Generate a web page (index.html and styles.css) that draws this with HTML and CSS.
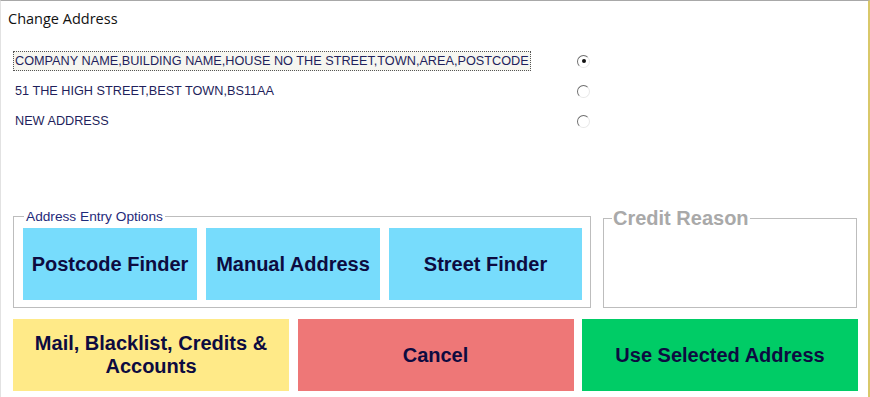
FILE: index.html
```html
<!DOCTYPE html>
<html lang="en">
  <head>
    <meta charset="UTF-8" />
    <meta name="viewport" content="width=device-width, initial-scale=1.0" />
    <title>Change Address</title>
    <link rel="stylesheet" href="styles.css">
  </head>
  <body>
    <div class="window">
      <div class="title">Change Address</div>

      <!-- Lista de endereços -->
      <ul class="addresses">
        <li class="address-row">
          <span class="address-cell"><span class="address-text selected">COMPANY NAME,BUILDING NAME,HOUSE NO THE STREET,TOWN,AREA,POSTCODE</span></span>
          <span class="radio checked"></span>
        </li>
        <li class="address-row">
          <span class="address-cell"><span class="address-text">51 THE HIGH STREET,BEST TOWN,BS11AA</span></span>
          <span class="radio"></span>
        </li>
        <li class="address-row">
          <span class="address-cell"><span class="address-text">NEW ADDRESS</span></span>
          <span class="radio"></span>
        </li>
      </ul>

      <!-- Opções de entrada -->
      <div class="options-row">
        <fieldset class="group entry-options">
          <legend>Address Entry Options</legend>
          <button class="btn btn-cyan btn-small">Postcode Finder</button>
          <button class="btn btn-cyan btn-small">Manual Address</button>
          <button class="btn btn-cyan btn-wide">Street Finder</button>
        </fieldset>
        <fieldset class="group credit-reason">
          <legend>Credit Reason</legend>
        </fieldset>
      </div>

      <!-- Botões de ação -->
      <div class="actions">
        <button class="btn btn-yellow">Mail, Blacklist, Credits &amp;<br>Accounts</button>
        <button class="btn btn-red">Cancel</button>
        <button class="btn btn-green">Use Selected Address</button>
      </div>
    </div>
  </body>
</html>
```

FILE: styles.css
```css
body {
  margin: 0;
  font-family: "Liberation Sans", Arial, sans-serif;
  background: #fff;
}

.window {
  width: 870px;
  height: 397px;
  box-sizing: border-box;
  border-top: 1px solid #a8a8a8;
  border-right: 2px solid #d9c86a;
  border-left: 1px solid #e2e2e2;
  background: #fff;
  overflow: hidden;
}

.title {
  height: 35px;
  line-height: 35px;
  padding-left: 7px;
  font-family: "Open Sans", "Noto Sans", sans-serif;
  font-size: 14.5px;
  color: #111;
}

/* Lista de endereços */
.addresses {
  list-style: none;
  margin: 10px 0 0 0;
  padding: 0;
}

.address-row {
  display: flex;
  align-items: center;
  height: 30px;
}

.address-cell {
  width: 564px;
  padding-left: 12px;
}

.address-text {
  display: inline-block;
  padding: 2px 1px;
  border: 1px dotted transparent;
  font-size: 12.7px;
  color: #1f1f5c;
  white-space: nowrap;
}

.address-text.selected {
  border-color: #555;
  background: #f6f6f0;
}

.radio {
  position: relative;
  width: 11px;
  height: 11px;
  border-radius: 50%;
  border: 1px solid;
  border-color: #6e6e6e #e8e8e8 #e8e8e8 #6e6e6e;
  background: #fff;
}

.radio.checked:after {
  content: "";
  position: absolute;
  left: 3.5px;
  top: 3.5px;
  width: 4px;
  height: 4px;
  border-radius: 50%;
  background: #111;
}

/* Caixas de grupo */
.options-row {
  display: flex;
  align-items: flex-end;
  gap: 12px;
  margin: 73px 0 0 12px;
}

.group {
  margin: 0;
  border: 1px solid #bdbdbd;
}

.entry-options {
  display: flex;
  gap: 9px;
  width: 578px;
  height: 99px;
  box-sizing: border-box;
  padding: 4px 7px 7px 9px;
}

.entry-options legend {
  margin-left: 1px;
  padding: 0 2px;
  font-size: 13.7px;
  line-height: 15px;
  color: #1f2a7a;
}

.credit-reason {
  width: 254px;
  height: 99px;
  box-sizing: border-box;
  padding: 0;
}

.credit-reason legend {
  margin-left: 8px;
  padding: 0 1px;
  font-size: 20px;
  font-weight: bold;
  line-height: 18px;
  color: #a9a9a9;
}

/* Botões */
.btn {
  border: none;
  margin: 0;
  padding: 0;
  font-family: "Liberation Sans", Arial, sans-serif;
  font-size: 20px;
  font-weight: bold;
  color: #0d0b40;
  line-height: 23px;
  cursor: pointer;
}

.btn-cyan {
  background: #77dcfc;
  height: 72px;
}

.btn-small {
  width: 174px;
}

.btn-wide {
  width: 193px;
}

.actions {
  display: flex;
  gap: 8.5px;
  margin: 11px 0 0 12px;
}

.actions .btn {
  width: 276px;
  height: 72px;
}

.btn-yellow {
  background: #ffea88;
}

.btn-red {
  background: #ee7777;
}

.btn-green {
  background: #00cc66;
}
```
